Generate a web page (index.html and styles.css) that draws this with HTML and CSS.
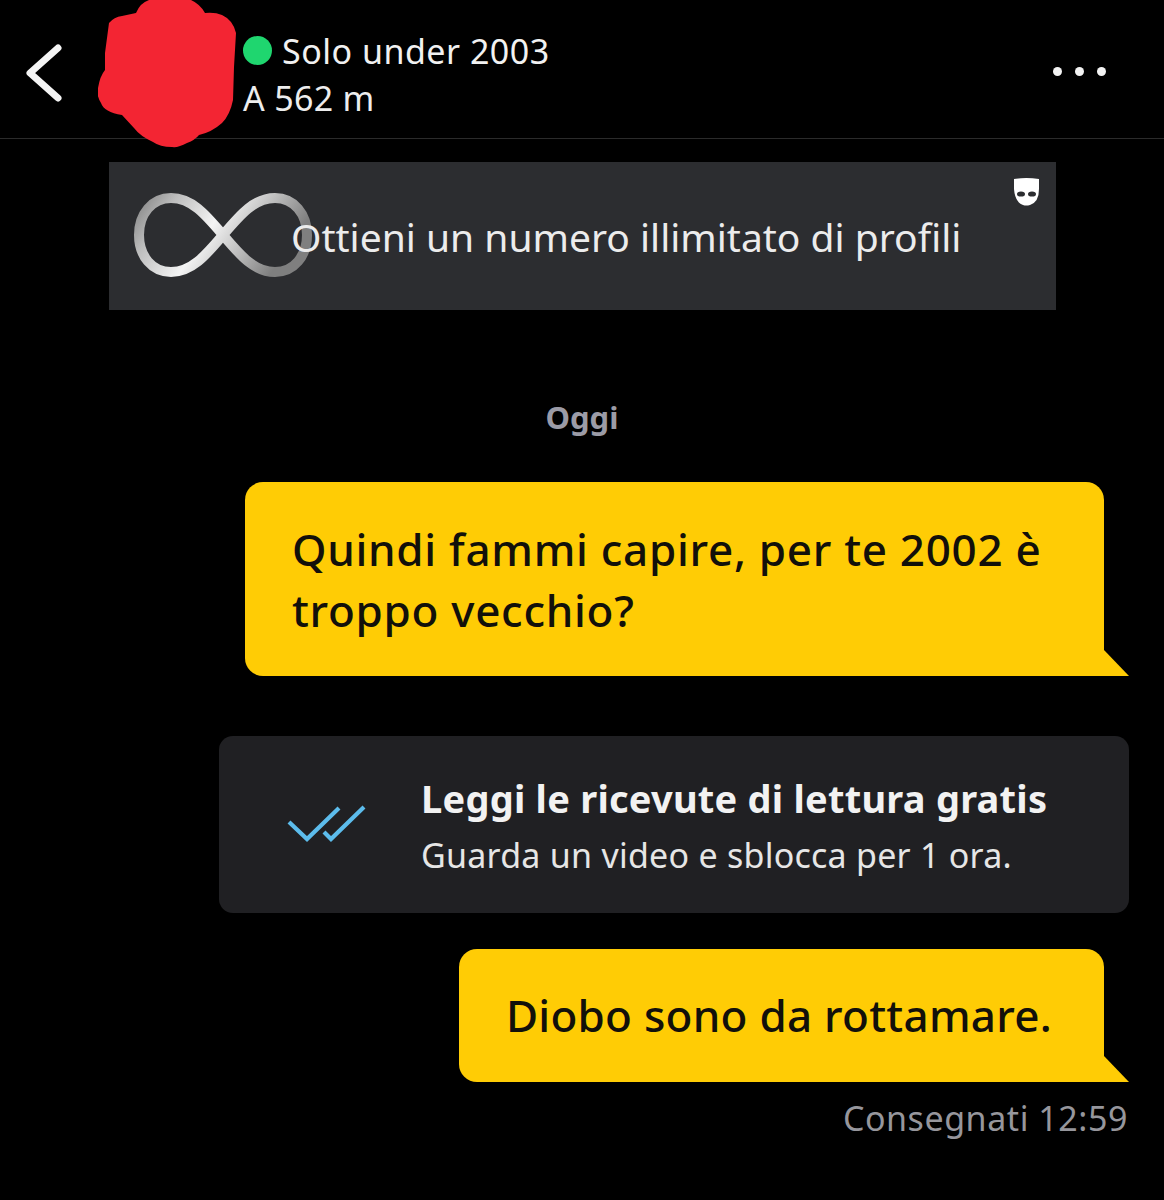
FILE: index.html
```html
<!DOCTYPE html>
<html lang="it">
<head>
<meta charset="utf-8">
<title>Chat</title>
<link rel="stylesheet" href="styles.css">
</head>
<body>
<div class="screen">
  <header class="topbar">
    <svg class="back" width="36" height="60" viewBox="0 0 36 60"><path d="M32 4 L4 29 L32 54" fill="none" stroke="#f4f4f4" stroke-width="7" stroke-linecap="round" stroke-linejoin="round"/></svg>
    <div class="who">
      <div class="status"><span class="online"></span><span class="name">Solo under 2003</span></div>
      <div class="dist">A 562 m</div>
    </div>
    <div class="more"><span></span><span></span><span></span></div>
    <svg class="redact" width="140" height="148" viewBox="98 0 140 148"><path fill="#f32533" d="M136 13 Q140 3 149 0 L191 0 Q200 4 205 13 Q215 12 222 15 Q233 20 236 33 L234 67 L233 100 Q230 115 222 123 Q212 132 199 135 Q195 140 187 143 Q178 148 172 147 Q160 147 153 142 Q140 136 134 128 L122 115 Q104 112 101 103 Q96 95 98 88 Q100 76 105 70 L105 53 L109 23 Q114 17 122 16 Z"/></svg>
  </header>

  <section class="promo">
    <svg class="infinity" width="178" height="84" viewBox="0 0 178 84">
      <defs>
        <linearGradient id="silver" x1="0" y1="0" x2="1" y2="0.3">
          <stop offset="0" stop-color="#858585"/>
          <stop offset="0.2" stop-color="#bdbdbd"/>
          <stop offset="0.5" stop-color="#f4f4f4"/>
          <stop offset="0.75" stop-color="#bcbcbc"/>
          <stop offset="1" stop-color="#7f7f7f"/>
        </linearGradient>
      </defs>
      <path d="M89 42 C72 22 58 5 37 5 C18 5 5 21 5 42 C5 63 18 79 37 79 C58 79 72 62 89 42 C106 22 120 5 141 5 C160 5 173 21 173 42 C173 63 160 79 141 79 C120 79 106 62 89 42 Z" fill="none" stroke="url(#silver)" stroke-width="10"/>
    </svg>
    <p class="promo-text">Ottieni un numero illimitato di profili</p>
    <svg class="mask" width="25" height="28" viewBox="0 0 25 28"><path fill="#fff" d="M0 1 Q12 -1 25 1 L25 11 Q25 24 16 27 Q12 28 9 27 Q1 24 0 11 Z"/><ellipse cx="7" cy="16" rx="4" ry="2.6" fill="#2c2d30"/><ellipse cx="18" cy="16" rx="4" ry="2.6" fill="#2c2d30"/></svg>
  </section>

  <div class="day">Oggi</div>

  <div class="bubble bubble-long">Quindi fammi capire, per te 2002 è troppo vecchio?</div>

  <section class="receipts">
    <svg class="checks" width="80" height="38" viewBox="0 0 80 38"><path d="M3 17 L21 34 L53 3 M38 27 L45 34 L78 2" fill="none" stroke="#5cbcec" stroke-width="4.2"/></svg>
    <div class="receipts-copy">
      <div class="receipts-title">Leggi le ricevute di lettura gratis</div>
      <div class="receipts-sub">Guarda un video e sblocca per 1 ora.</div>
    </div>
  </section>

  <div class="bubble bubble-short">Diobo sono da rottamare.</div>

  <div class="delivered">Consegnati 12:59</div>
</div>
</body>
</html>
```
FILE: styles.css
```css
* { box-sizing: border-box; }
html, body { margin: 0; padding: 0; background: #000; }
body { font-family: "Noto Sans", "Open Sans", sans-serif; }
.screen { width: 1164px; height: 1200px; display: flex; flex-direction: column; overflow: hidden; }

.topbar { position: relative; height: 139px; flex: none; display: flex; align-items: flex-start; border-bottom: 1px solid #2b2b2b; padding-left: 26px; }
.back { flex: none; margin-top: 44px; }
.who { margin-left: 181px; margin-top: 27px; color: #f1f1f1; }
.status { display: flex; align-items: center; height: 48px; }
.online { width: 29px; height: 29px; border-radius: 50%; background: #1fd66f; margin: -2px 10px 0 0; }
.name { font-size: 34px; line-height: 48px; letter-spacing: 0.5px; }
.dist { font-size: 34px; line-height: 46px; letter-spacing: 0.3px; color: #ededed; }
.more { margin-left: auto; margin-right: 58px; margin-top: 67px; display: flex; gap: 13px; }
.more span { width: 9px; height: 9px; border-radius: 50%; background: #f3f3f3; }
.redact { position: absolute; left: 98px; top: 0; }

.promo { position: relative; flex: none; margin: 23px 0 0 109px; width: 947px; height: 148px; background: #2c2d30; display: flex; align-items: center; padding-left: 25px; }
.infinity { flex: none; margin-right: -21px; position: relative; top: -1px; }
.promo-text { position: relative; margin: 0; font-size: 39px; color: #ececec; white-space: nowrap; }
.mask { position: absolute; top: 16px; right: 17px; }

.day { flex: none; margin-top: 83px; text-align: center; font-size: 31px; line-height: 48px; font-weight: 700; color: #9b9ba6; }

.bubble { position: relative; flex: none; align-self: flex-end; margin-right: 60px; background: #ffcc05; color: #12100a; border-radius: 18px 18px 0 18px; font-size: 44px; font-weight: 500; line-height: 61px; }
.bubble::after { content: ""; position: absolute; right: -25px; bottom: 0; width: 25px; height: 26px; background: #ffcc05; clip-path: polygon(0 0, 100% 100%, 0 100%); }
.bubble-long { margin-top: 41px; width: 859px; height: 194px; padding: 37px 30px 0 47px; letter-spacing: 0.7px; }
.bubble-short { margin-top: 36px; height: 133px; padding: 36px 52px 0 47px; white-space: nowrap; letter-spacing: 0.26px; }

.receipts { flex: none; margin: 60px 35px 0 219px; height: 177px; background: #202023; border-radius: 14px; display: flex; align-items: center; padding-left: 67px; }
.checks { flex: none; margin-top: -2px; }
.receipts-copy { margin-left: 55px; margin-top: 10px; }
.receipts-title { font-size: 38px; line-height: 50px; font-weight: 700; letter-spacing: 0.23px; color: #f2f2f2; white-space: nowrap; }
.receipts-sub { font-size: 34px; line-height: 64px; letter-spacing: 0.25px; color: #e6e6e6; white-space: nowrap; }

.delivered { flex: none; align-self: flex-end; margin: 12px 36px 0 0; font-size: 34px; line-height: 48px; letter-spacing: 0.55px; color: #96969c; }
```
